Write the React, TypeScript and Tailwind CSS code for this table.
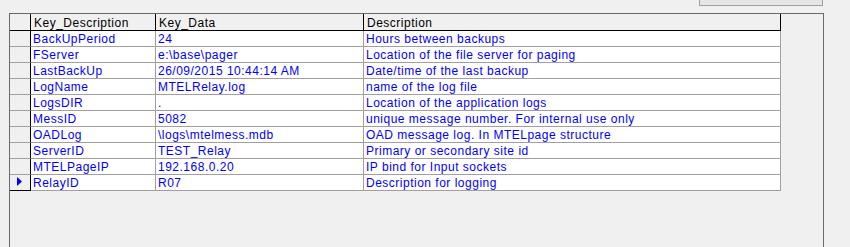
import React from "react";

type Row = { key: string; data: string; desc: string };

const rows: Row[] = [
  { key: "BackUpPeriod", data: "24", desc: "Hours between backups" },
  { key: "FServer", data: "e:\\base\\pager", desc: "Location of the file server for paging" },
  { key: "LastBackUp", data: "26/09/2015 10:44:14 AM", desc: "Date/time of the last backup" },
  { key: "LogName", data: "MTELRelay.log", desc: "name of the log file" },
  { key: "LogsDIR", data: ".", desc: "Location of the application logs" },
  { key: "MessID", data: "5082", desc: "unique message number. For internal use only" },
  { key: "OADLog", data: "\\logs\\mtelmess.mdb", desc: "OAD message log. In MTELpage structure" },
  { key: "ServerID", data: "TEST_Relay", desc: "Primary or secondary site id" },
  { key: "MTELPageIP", data: "192.168.0.20", desc: "IP bind for Input sockets" },
  { key: "RelayID", data: "R07", desc: "Description for logging" },
];

const textCls = "block overflow-visible whitespace-nowrap leading-[15px] tracking-[0.5px]";

function HeaderCell({ w, label }: { w: string; label: string }) {
  return (
    <div className={`${w} h-[17px] shrink-0 overflow-hidden border-b border-r border-black bg-[#f0f0f0] pl-[3px] pt-[1.5px] text-black`}>
      <span className={textCls}>{label}</span>
    </div>
  );
}

function DataCell({ w, text }: { w: string; text: string }) {
  return (
    <div className={`${w} h-[16px] shrink-0 overflow-hidden border-b border-r border-[#a0a0a0] bg-white pl-[2px] pt-[1px] text-[#0000ff]`}>
      <span className={textCls}>{text}</span>
    </div>
  );
}

export default function App() {
  return (
    <div
      className="flex h-[247px] w-[850px] flex-col overflow-hidden bg-[#f0f0f0] text-[12px]"
      style={{ fontFamily: '"Liberation Sans", Arial, sans-serif' }}
    >
      {/* toolbar button, mostly scrolled out of view */}
      <div className="flex pl-[699px]">
        <div className="h-[6px] w-[124px] border-x border-b border-[#a0a0a0] bg-[#e5e5e5]" />
      </div>

      {/* settings panel */}
      <div className="ml-[9px] mt-[7px] flex w-[815px] flex-1 flex-col border-l border-r border-t border-[#6a6a6a]">
        <div className="flex w-[771px] flex-col">
          {/* column headers */}
          <div className="flex">
            <div className="h-[17px] w-[21px] shrink-0 border-b border-r border-black bg-[#f0f0f0]" />
            <HeaderCell w="w-[125px]" label="Key_Description" />
            <HeaderCell w="w-[208px]" label="Key_Data" />
            <HeaderCell w="w-[417px]" label="Description" />
          </div>

          {rows.map((r, i) => {
            const current = i === rows.length - 1;
            return (
              <div key={r.key} className="flex">
                <div
                  className={`flex h-[16px] w-[21px] shrink-0 items-start border-r border-black bg-[#f0f0f0] pl-[7px] pt-[2px] ${
                    current ? "border-b border-b-black" : "border-b border-b-[#a0a0a0]"
                  }`}
                >
                  {current && (
                    <svg width="5" height="9" viewBox="0 0 5 9">
                      <path d="M0 0 L5 4.5 L0 9 Z" fill="#0000ff" />
                    </svg>
                  )}
                </div>
                <DataCell w="w-[125px]" text={r.key} />
                <DataCell w="w-[208px]" text={r.data} />
                <DataCell w="w-[417px]" text={r.desc} />
              </div>
            );
          })}
        </div>
      </div>
    </div>
  );
}
